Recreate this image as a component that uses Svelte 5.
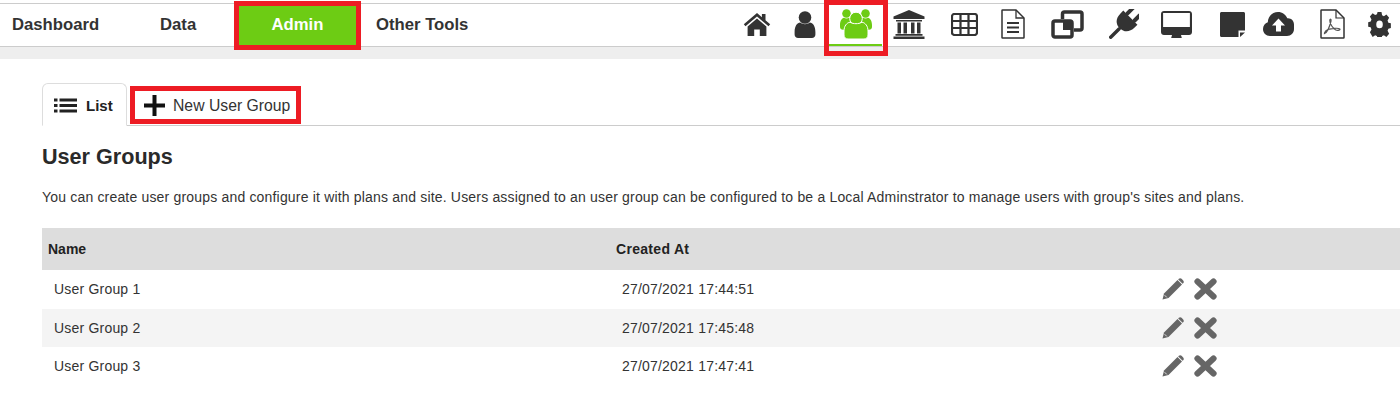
<script>
  const rows = [
    { name: 'User Group 1', created: '27/07/2021 17:44:51' },
    { name: 'User Group 2', created: '27/07/2021 17:45:48' },
    { name: 'User Group 3', created: '27/07/2021 17:47:41' }
  ];
</script>

<div class="page">
  <header class="nav">
    <a class="link dash">Dashboard</a>
    <a class="link data">Data</a>
    <a class="link admin">Admin</a>
    <a class="link other">Other Tools</a>
    <div class="icons">
      <span class="cell">
        <svg width="28" height="24" viewBox="0 0 28 24"><path d="M14 1 0.8 12.2l1.7 2L14 4.6l11.5 9.6 1.7-2L22.5 8.3V2h-3.6v3.2z" fill="#333"/><path d="M14 6.6 4.6 14.4V24h6.6v-6.6h5.6V24h6.6v-9.6z" fill="#333"/></svg>
      </span>
      <span class="cell">
        <svg width="22" height="27" viewBox="0 0 22 27"><circle cx="11" cy="6.5" r="6.3" fill="#333"/><path d="M0.6 21c0-6 2.6-9 5.6-9.4 1.4 1 3 1.6 4.8 1.6s3.400-.6 4.800-1.600c3 .4 5.600 3.400 5.600 9.400v2.500c0 2-1.500 3.500-3.500 3.500H4.100c-2 0-3.500-1.500-3.500-3.500z" fill="#333"/></svg>
      </span>
      <span class="cell users">
        <svg width="32" height="30" viewBox="0 0 32 30" fill="#6dcc14">
          <circle cx="6.500" cy="4.500" r="4.300"/><circle cx="25.500" cy="4.500" r="4.300"/>
          <path d="M0 16c0-4 1.800-6.800 4-7.200 1.500.9 3.600.9 5 0l4 2-4 10H3c-1.800 0-3-1.300-3-2.800z"/>
          <path d="M32 16c0-4-1.800-6.800-4-7.200-1.500.9-3.600.9-5 0l-4 2 4 10h6c1.800 0 3-1.300 3-2.800z"/>
          <circle cx="16" cy="9.500" r="6.300" stroke="#fff" stroke-width="1"/>
          <path d="M4 22c0-5 2.800-8.300 6-8.800 3.400 2 8.600 2 12 0 3.200.5 6 3.800 6 8.800v4c0 2.400-1.600 4-4 4H8c-2.400 0-4-1.600-4-4z" stroke="#fff" stroke-width="1"/>
        </svg>
      </span>
      <span class="cell">
        <svg width="32" height="29" viewBox="0 0 32 29" fill="#333"><path d="M16 0 0.500 6.500V9h31V6.500z"/><path d="M3 10h26v1.500H3zM4.500 12.500h3.500v11H4.500zM10.500 12.500H14v11h-3.500zM18 12.500h3.500v11H18zM24 12.500h3.500v11H24zM2.500 24h27v1.800h-27zM0.500 26.500h31V29H0.500z"/></svg>
      </span>
      <span class="cell">
        <svg width="27" height="23" viewBox="0 0 27 23" fill="none" stroke="#333" stroke-width="2.200"><rect x="1" y="1" width="25" height="21" rx="2.500"/><path d="M1 8h25M1 15h25M9.500 1.500v20M17.500 1.500v20"/></svg>
      </span>
      <span class="cell">
        <svg width="24" height="30" viewBox="0 0 24 30" fill="none" stroke="#333" stroke-width="1.500"><path d="M1 1.500c0-.3.200-.500.500-.500H15l8 8v19.500c0 .3-.2.500-.5.500h-21c-.3 0-.5-.2-.5-.5z"/><path d="M15 1v8h8" stroke-width="1.300"/><path d="M6 14h12M6 18.500h12M6 23h12" stroke-width="2"/></svg>
      </span>
      <span class="cell">
        <svg width="33" height="29" viewBox="0 0 33 29" fill="none" stroke="#333" stroke-width="3.500"><path d="M11.500 9V4c0-1.100.9-2 2-2h15.500c1.100 0 2 .9 2 2v14c0 1.100-.9 2-2 2h-6"/><rect x="2" y="11" width="19" height="16" rx="2"/><rect x="12" y="11" width="9" height="9" fill="#333" stroke="none"/></svg>
      </span>
      <span class="cell">
        <svg width="30" height="30" viewBox="0 0 30 30" fill="#333"><g transform="rotate(45 15 15)"><rect x="8" y="-4" width="4" height="11" rx="2"/><rect x="18" y="-4" width="4" height="11" rx="2"/><path d="M5 6h20v4c0 7-4 11-10 11S5 17 5 10z"/><rect x="13.300" y="20" width="3.400" height="15.500" rx="1.700"/></g></svg>
      </span>
      <span class="cell">
        <svg width="31" height="27" viewBox="0 0 31 27"><path fill="#333" fill-rule="evenodd" d="M3 0h25c1.700 0 3 1.300 3 3v18c0 1.700-1.300 3-3 3H3c-1.700 0-3-1.300-3-3V3C0 1.300 1.300 0 3 0zm-.9 2v14h26.800V2z"/><path fill="#333" d="M11 24h9l.8 3H10.200z"/></svg>
      </span>
      <span class="cell">
        <svg width="25" height="25" viewBox="0 0 25 25"><path fill="#333" d="M1.500 0h22c.8 0 1.500.7 1.500 1.500V18.500h-6.500V25H1.500C.7 25 0 24.300 0 23.500v-22C0 .7.700 0 1.500 0z"/><path fill="#333" d="M20 20.500h5L20 25z"/></svg>
      </span>
      <span class="cell">
        <svg width="31" height="24" viewBox="0 0 31 24"><path fill="#333" d="M7 24C3 24 0 21 0 17c0-3.200 2-5.700 4.800-6.700C5 4.500 9.500 0 15 0c4.200 0 7.800 2.500 9.300 6.300 .3 0 .5 0 .7 0 3.500 0 6 2.800 6 6.200v4.500c0 4-3 7-7 7z"/><path fill="#fff" d="M15.500 6.500 22 13.500h-4v6h-5v-6H9z"/></svg>
      </span>
      <span class="cell">
        <svg width="25" height="30" viewBox="0 0 25 30" fill="none" stroke="#333"><path stroke-width="1.500" d="M1 1.500c0-.3.200-.500.500-.500H16l8 8v19.500c0 .3-.2.500-.5.500h-22c-.3 0-.5-.2-.5-.5z"/><path stroke-width="1.200" d="M16 1v8h8"/><path stroke-width="1.200" stroke="#555" d="M4.500 24.500c2-1 5-6 6.500-12.500 .5-2-1-2.500-1.200-.5-.2 3 3.500 8.500 6 9.500 2 .8 5 0 4-1-1.500-1.500-8.500-.5-12 .5-2 .6-3 2.500-3.300 3.500z"/></svg>
      </span>
      <span class="cell">
        <svg width="25" height="26" viewBox="0 0 25 26"><path fill="#333" fill-rule="evenodd" d="M10 0h5l.8 3.600 2.300 1 3.200-2 3.500 3.500-2 3.200 1 2.300 3.200.7v5l-3.200.8-1 2.300 2 3.200-3.500 3.500-3.200-2-2.300 1-.8 3.400h-5l-.8-3.400-2.300-1-3.200 2L.2 22.100l2-3.200-1-2.300L-2 16v-5l3.200-.7 1-2.300-2-3.200 3.500-3.500 3.200 2 2.300-1zM12.500 9.300a4.200 4.200 0 1 0 0 8.400a4.200 4.200 0 1 0 0-8.400z" transform="translate(1.900 0) scale(.85 1)"/></svg>
      </span>
    </div>
  </header>
  <div class="band"></div>

  <main class="content">
    <div class="tabs">
      <a class="tab active">
        <svg width="23" height="15" viewBox="0 0 23 15" fill="#222"><rect x="0" y="0.500" width="3.500" height="3"/><rect x="0" y="6" width="3.500" height="3"/><rect x="0" y="11.500" width="3.500" height="3"/><rect x="5.500" y="0.500" width="17.500" height="3"/><rect x="5.500" y="6" width="17.500" height="3"/><rect x="5.500" y="11.500" width="17.500" height="3"/></svg>
        List
      </a>
      <a class="tab add">
        <svg width="21" height="21" viewBox="0 0 21 21" fill="#111"><path d="M8.500 0h4v8.500H21v4h-8.500V21h-4v-8.500H0v-4h8.500z"/></svg>
        New User Group
      </a>
    </div>

    <h1>User Groups</h1>
    <p>You can create user groups and configure it with plans and site. Users assigned to an user group can be configured to be a Local Adminstrator to manage users with group's sites and plans.</p>

    <div class="table">
      <div class="row head">
        <span class="c-name">Name</span>
        <span class="c-date">Created At</span>
      </div>
      {#each rows as r}
        <div class="row body">
          <span class="c-name">{r.name}</span>
          <span class="c-date">{r.created}</span>
          <span class="actions">
            <svg width="22" height="22" viewBox="0 0 22 22" fill="#666"><path d="M0.500 21.500 2 15.500 15.500 2l4.500 4.500L6.500 20z"/><path d="M16.800 .8c.8-.8 2-.8 2.800 0l1.600 1.600c.8.8.8 2 0 2.800l-.6.6-4.400-4.400z"/><path d="M2.600 17.200l2.200 2.200" stroke="#fff" stroke-width="0.800"/></svg>
            <svg width="23" height="22" viewBox="0 0 23 22" fill="none" stroke="#666" stroke-width="6.200" stroke-linecap="round"><path d="M3.500 3.500 19.500 18.500M19.500 3.500 3.500 18.500"/></svg>
          </span>
        </div>
      {/each}
    </div>
  </main>

  <span class="mark m-admin"></span>
  <span class="mark m-users"></span>
  <span class="mark m-new"></span>
</div>

<style>
  :global(body) { margin: 0; background: #fff; overflow: hidden; }
  .page {
    position: relative;
    width: 1400px;
    height: 407px;
    overflow: hidden;
    font-family: "Liberation Sans", Arial, sans-serif;
    font-size: 14px;
    color: #333;
    padding-top: 3px;
    box-sizing: border-box;
  }
  .nav {
    display: flex;
    align-items: stretch;
    height: 42px;
    border-top: 1px solid #ccc;
    border-bottom: 1px solid #ccc;
    box-sizing: content-box;
  }
  .link {
    display: flex;
    align-items: center;
    font-weight: 700;
    font-size: 16.700px;
    color: #333;
    padding-bottom: 1px;
    box-sizing: border-box;
  }
  .dash { padding-left: 12px; width: 160px; }
  .data { width: 79px; }
  .admin { width: 117px; justify-content: center; background: #6dcc14; color: #fff; }
  .other { margin-left: 20px; }
  .icons {
    margin-left: auto;
    margin-right: 9px;
    display: grid;
    grid-template-columns: 48px 48px 53px 54px 56px 42px 66px 48px 56px 56px 36px 72px 23px;
    height: 42px;
  }
  .cell {
    display: flex;
    align-items: center;
    justify-content: center;
    padding-bottom: 2px;
    box-sizing: border-box;
  }
  .users { border-bottom: 2px solid #6dcc14; padding-bottom: 1px; height: 41px; align-self: start; box-sizing: content-box; height: 39px; }
  .band { height: 12px; background: #eee; }
  .content { padding: 24px 0 0 42px; }
  .tabs {
    display: flex;
    height: 43px;
    box-sizing: border-box;
    border-bottom: 1px solid #ccc;
  }
  .tab {
    display: flex;
    align-items: center;
    height: 43px;
    box-sizing: border-box;
  }
  .active {
    width: 85px;
    padding-left: 11px;
    gap: 9px;
    padding-top: 1px;
    border: 1px solid #ddd;
    border-bottom: 1px solid #fff;
    border-radius: 6px 6px 0 0;
    font-weight: 700;
    font-size: 15px;
    color: #222;
    background: #fff;
  }
  .add { padding-left: 17px; gap: 8px; padding-top: 2px; font-size: 15.750px; color: #333; }
  h1 { margin: 20px 0 0; font-size: 21.600px; line-height: 22px; font-weight: 700; color: #2a2a2a; }
  p { margin: 20px 0 0; font-size: 14px; line-height: 18px; letter-spacing: 0.180px; color: #333; white-space: nowrap; }
  .table { margin-top: 22px; }
  .row { display: flex; align-items: center; }
  .head { height: 42px; background: #ddd; font-weight: 700; font-size: 14px; color: #222; }
  .head .c-name { width: 574px; padding-left: 6px; box-sizing: border-box; }
  .head .c-date { letter-spacing: 0.300px; }
  .body { height: 38.500px; font-size: 14px; letter-spacing: 0.200px; }
  .body:nth-child(3) { background: #f4f4f4; }
  .body .c-name { width: 580px; padding-left: 12px; box-sizing: border-box; }
  .body .c-date { width: 540px; }
  .actions { display: flex; gap: 10px; align-items: center; }
  .mark { position: absolute; border: 5px solid #ed1c24; box-sizing: border-box; pointer-events: none; }
  .m-admin { left: 234px; top: 1px; width: 127px; height: 49px; }
  .m-users { left: 824px; top: 0; width: 64px; height: 56px; }
  .m-new { left: 130px; top: 86px; width: 171px; height: 38px; }
</style>
